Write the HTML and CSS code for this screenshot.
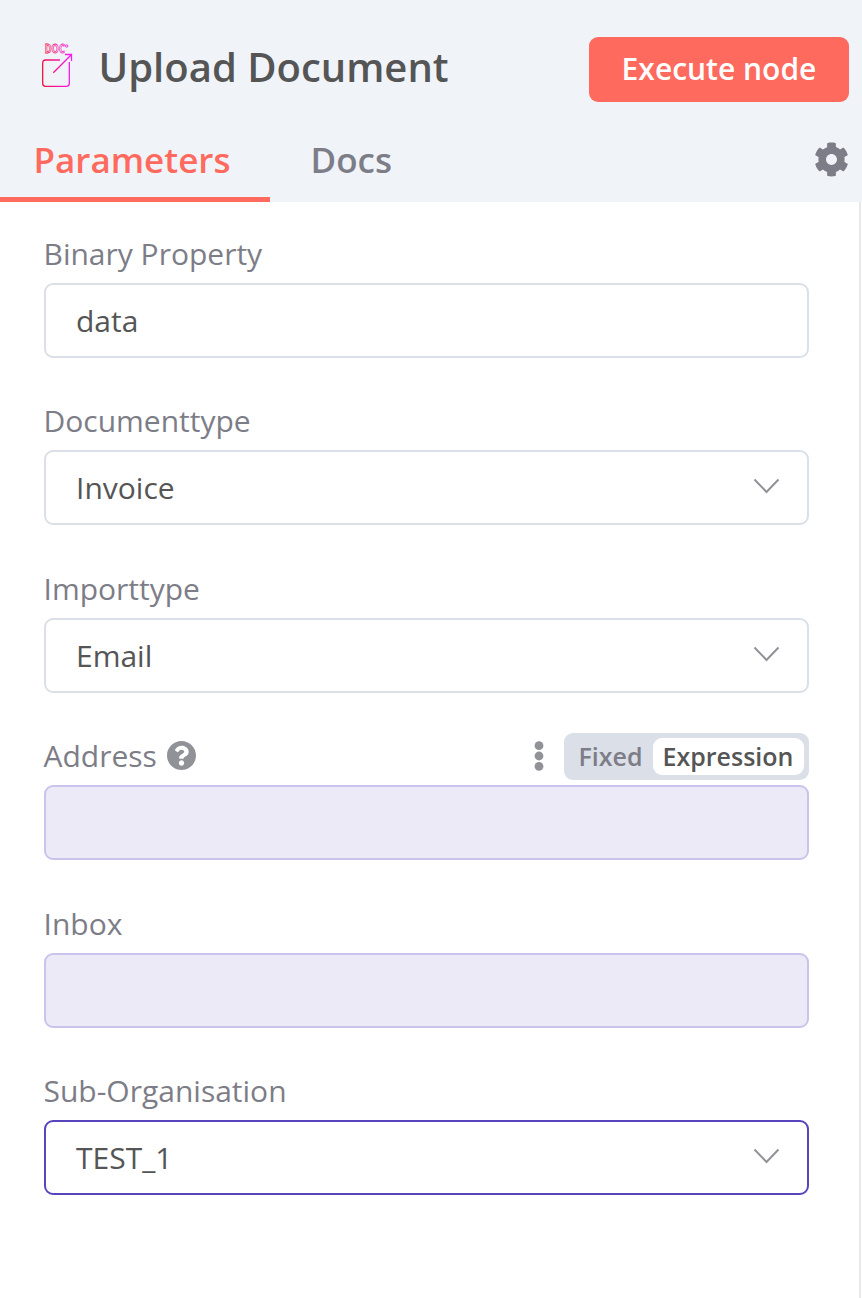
FILE: index.html
```html
<!DOCTYPE html>
<html lang="en">
<head>
<meta charset="utf-8">
<title>Upload Document</title>
<link rel="stylesheet" href="styles.css">
</head>
<body>
<main class="panel">
  <header class="header">
    <div class="title-row">
      <svg class="node-icon" viewBox="0 0 36 54" width="36" height="54">
        <defs>
          <linearGradient id="pink" gradientUnits="userSpaceOnUse" x1="2" y1="0" x2="32" y2="0">
            <stop offset="0" stop-color="#f0103c"/>
            <stop offset="1" stop-color="#f81cf8"/>
          </linearGradient>
        </defs>
        <text class="node-icon-text" x="4.8" y="18.800" textLength="20" lengthAdjust="spacingAndGlyphs">DOC</text>
        <circle cx="26.700" cy="12" r="1.200" fill="none" stroke="url(#pink)" stroke-width=".9"/>
        <path d="M20 26H5.500Q2.700 26 2.700 29V49.500Q2.700 52.300 5.500 52.300H26.500Q29.300 52.300 29.300 49.500V28M13.300 38.700L31.300 20.700M25 20.500H31.500V27" fill="none" stroke="url(#pink)" stroke-width="1.300"/>
      </svg>
      <h1 class="title">Upload Document</h1>
      <button class="execute">Execute node</button>
    </div>
    <nav class="tabs">
      <a class="tab active">Parameters</a>
      <a class="tab docs">Docs</a>
      <svg class="gear" viewBox="0 0 512 512" width="35" height="35"><path fill="currentColor" d="M487.400 315.700l-42.600-24.600c4.300-23.200 4.300-47 0-70.200l42.600-24.600c4.900-2.800 7.100-8.600 5.500-14-11.100-35.600-30-67.800-54.700-94.600-3.800-4.100-10-5.100-14.800-2.300L380.800 110c-17.900-15.400-38.500-27.300-60.800-35.100V25.800c0-5.600-3.900-10.500-9.400-11.700-36.700-8.200-74.300-7.800-109.200 0-5.500 1.200-9.400 6.100-9.400 11.700V75c-22.200 7.900-42.800 19.800-60.800 35.100L88.700 85.500c-4.900-2.800-11-1.900-14.800 2.300-24.700 26.700-43.600 58.900-54.700 94.600-1.700 5.400.6 11.200 5.500 14L67.300 221c-4.300 23.200-4.300 47 0 70.200l-42.600 24.600c-4.900 2.800-7.100 8.600-5.500 14 11.100 35.600 30 67.800 54.700 94.600 3.800 4.100 10 5.100 14.800 2.300l42.600-24.600c17.900 15.400 38.500 27.300 60.800 35.100v49.200c0 5.600 3.900 10.500 9.400 11.700 36.700 8.200 74.300 7.800 109.200 0 5.500-1.200 9.400-6.100 9.400-11.700v-49.200c22.200-7.900 42.800-19.800 60.800-35.100l42.600 24.600c4.900 2.800 11 1.900 14.800-2.300 24.700-26.700 43.600-58.900 54.700-94.600 1.500-5.500-.7-11.300-5.600-14.100zM256 336c-44.100 0-80-35.900-80-80s35.900-80 80-80 80 35.900 80 80-35.900 80-80 80z"/></svg>
    </nav>
  </header>
  <form class="fields">
    <section class="field">
      <div class="label">Binary Property</div>
      <div class="control">data</div>
    </section>
    <section class="field">
      <div class="label">Documenttype</div>
      <div class="control">Invoice<svg class="chevron" viewBox="0 0 28 18" width="28" height="18"><path d="M1.500 2.500L13.500 15L25.500 2.500"/></svg></div>
    </section>
    <section class="field">
      <div class="label">Importtype</div>
      <div class="control">Email<svg class="chevron" viewBox="0 0 28 18" width="28" height="18"><path d="M1.500 2.500L13.500 15L25.500 2.500"/></svg></div>
    </section>
    <section class="field">
      <div class="label">
        <span>Address</span>
        <svg class="help" viewBox="8 8 496 496" width="29" height="29"><path fill="currentColor" d="M504 256c0 136.997-111.043 248-248 248S8 392.997 8 256C8 119.083 119.043 8 256 8s248 111.083 248 248zM262.655 90c-54.497 0-89.255 22.957-116.549 63.758-3.536 5.286-2.353 12.415 2.715 16.258l34.699 26.310c5.205 3.947 12.621 3.008 16.665-2.122 17.864-22.658 30.113-35.797 57.303-35.797 20.429 0 45.698 13.148 45.698 32.958 0 14.976-12.363 22.667-32.534 33.976C247.128 238.528 216 254.941 216 296v4c0 6.627 5.373 12 12 12h56c6.627 0 12-5.373 12-12v-1.333c0-28.462 83.186-29.647 83.186-106.667 0-58.002-60.165-102-116.531-102zM256 338c-25.365 0-46 20.635-46 46 0 25.364 20.635 46 46 46s46-20.636 46-46c0-25.365-20.635-46-46-46z"/></svg>
        <svg class="dots" viewBox="0 0 10 30" width="10" height="30"><circle cx="5" cy="4.700" r="4.400"/><circle cx="5" cy="15" r="4.400"/><circle cx="5" cy="25.300" r="4.400"/></svg>
        <div class="toggle"><span class="option">Fixed</span><span class="option selected">Expression</span></div>
      </div>
      <div class="control expression"></div>
    </section>
    <section class="field">
      <div class="label">Inbox</div>
      <div class="control expression"></div>
    </section>
    <section class="field">
      <div class="label">Sub-Organisation</div>
      <div class="control focused">TEST_1<svg class="chevron" viewBox="0 0 28 18" width="28" height="18"><path d="M1.500 2.500L13.500 15L25.500 2.500"/></svg></div>
    </section>
  </form>
</main>
</body>
</html>
```
FILE: styles.css
```css
* { box-sizing: border-box; }
body { margin: 0; background: #fff; font-family: "Open Sans", sans-serif; color: #555; }
.panel { width: 862px; height: 1298px; display: flex; flex-direction: column; overflow: hidden; }
.header { height: 202px; flex: none; background: #f0f4f9; display: flex; flex-direction: column; justify-content: space-between; padding-top: 37px; }
.title-row { display: flex; align-items: center; height: 65px; padding: 0 13px 0 40px; }
.node-icon { flex: none; overflow: visible; margin-top: -17px; }
.node-icon-text { font: 700 12.500px/1 "Open Sans", sans-serif; fill: none; stroke: url(#pink); stroke-width: .8px; }
.title { margin: 0 0 5px 22.5px; font-size: 40px; font-weight: 600; line-height: 54px; white-space: nowrap; }
.execute { margin-left: auto; width: 260px; height: 65px; padding: 0 0 2px; border: 0; border-radius: 9px; background: #ff6a5e; color: #fff; font: 600 30px "Open Sans", sans-serif; }
.tabs { display: flex; height: 82px; padding-right: 13px; }
.tab { width: 270px; padding-left: 33.5px; font-size: 35px; font-weight: 600; line-height: 80px; color: #7d7d87; }
.tab.active { color: #ff6a5e; border-bottom: 5px solid #ff6a5e; }
.tab.docs { padding-left: 40.5px; }
.gear { margin: 22px 0 0 auto; color: #7d7d87; }
.fields { flex: 1; width: 861px; border-right: 2px solid #e8e8e8; padding: 30.9px 50px 0 44px; display: grid; grid-auto-rows: 167.5px; align-content: start; }
.field { display: flex; flex-direction: column; }
.label { display: flex; align-items: center; height: 50px; margin-left: -.5px; padding-bottom: 8px; font-size: 30px; line-height: 42px; color: #7d7d87; }
.control { display: flex; align-items: center; justify-content: space-between; height: 75px; padding: 0 26px 0 30px; border: 2px solid #dbdfe7; border-radius: 9px; font-size: 30px; }
.expression { background: #eceaf7; border-color: #cac3ec; }
.focused { border-color: #5845bd; }
.chevron { margin-top: -3px; fill: none; stroke: #909298; stroke-width: 2; }
.help { margin: -1px 0 0 10.5px; color: #909298; }
.dots { margin: -1px 0 0 auto; fill: #909298; }
.toggle { display: flex; width: 245px; height: 47px; margin-left: 20px; padding: 5px; border-radius: 9px; background: #dbdfe7; font-size: 25px; font-weight: 600; line-height: 37px; }
.option { width: 84px; padding-left: 9.5px; white-space: nowrap; }
.option.selected { width: 151px; border-radius: 9px; background: #fff; color: #555; }
```
